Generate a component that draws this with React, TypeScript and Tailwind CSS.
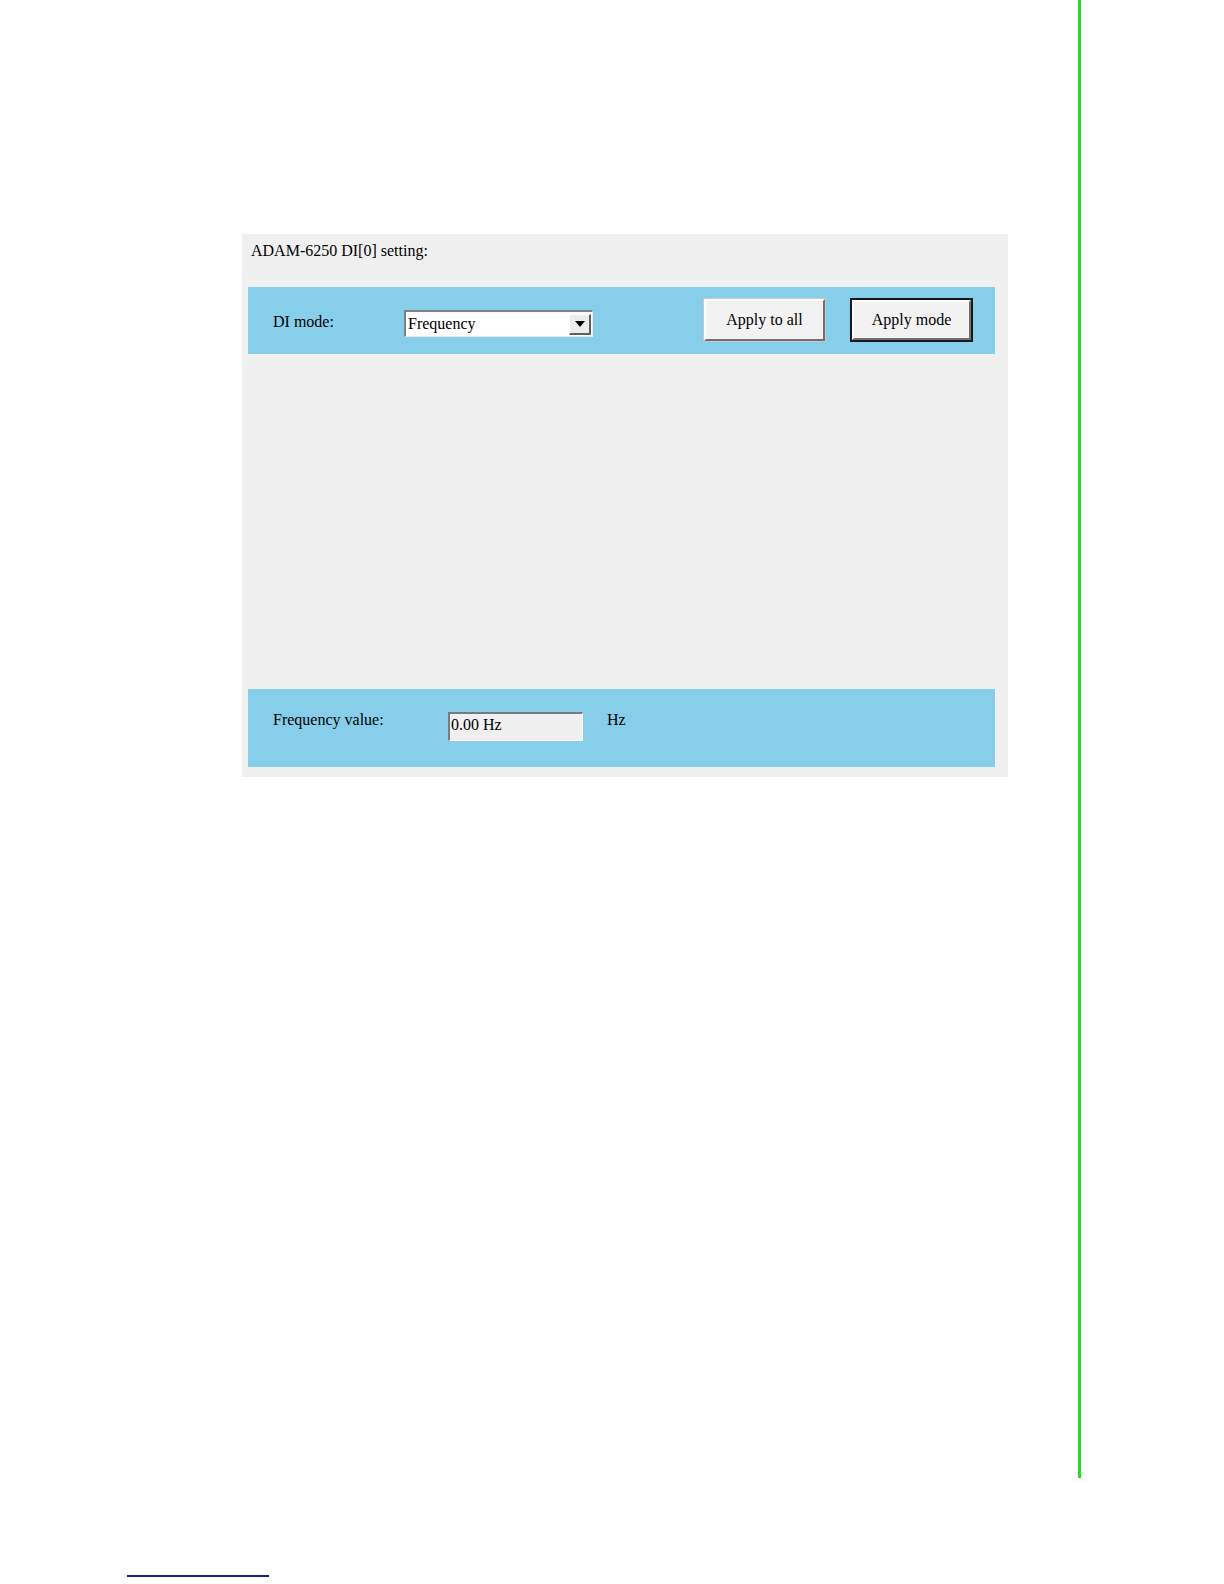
import React from "react";

const serif = { fontFamily: '"Liberation Serif", "Times New Roman", serif' };

function Button({ label, isDefault }: { label: string; isDefault?: boolean }) {
  const inner = (
    <div className="h-full w-full border-t-2 border-l-2 border-t-white border-l-white border-b-2 border-r-2 border-b-[#707070] border-r-[#707070] bg-[#f2f2f2] flex items-center justify-center text-[16px] text-black">
      {label}
    </div>
  );
  return isDefault ? (
    <div className="w-[123px] h-[44px] border-2 border-[#1a1a1a] bg-[#f2f2f2]">{inner}</div>
  ) : (
    <div className="w-[123px] h-[44px] border border-[#c8c8c8] bg-[#f2f2f2]">{inner}</div>
  );
}

export default function App() {
  return (
    <div className="w-[1224px] h-[1584px] bg-white flex flex-col" style={serif}>
      <div className="flex flex-row h-[1478px]">
        <div className="w-[1078px] flex flex-col">
          <div className="mt-[234px] ml-[242px] w-[766px] h-[543px] bg-[#f0f0f0] flex flex-col">
            <div className="pl-[9px] pt-[7px] h-[53px] text-[16px] leading-[20px] text-black">
              ADAM-6250 DI[0] setting:
            </div>
            <div className="ml-[6px] w-[747px] h-[67px] bg-[#87ceeb] flex flex-row items-start">
              <div className="ml-[25px] mt-[25px] w-[131px] text-[16px] leading-[20px] text-black">DI mode:</div>
              <div className="mt-[23px] w-[189px] h-[27px] bg-white border-t-2 border-l-2 border-t-[#808080] border-l-[#808080] border-b border-r border-b-[#e8e8e8] border-r-[#e8e8e8] flex flex-row items-center">
                <div className="flex-1 pl-[2px] text-[16px] leading-[20px] text-black">Frequency</div>
                <div className="w-[22px] h-[21px] mr-[1px] bg-[#ececec] border-t border-l border-t-white border-l-white border-b-2 border-r-2 border-b-[#606060] border-r-[#606060] flex items-center justify-center">
                  <svg width="10" height="6" viewBox="0 0 10 6">
                    <path d="M0 0 H10 L5 6 Z" fill="#000" />
                  </svg>
                </div>
              </div>
              <div className="ml-[110px] mt-[11px]">
                <Button label="Apply to all" />
              </div>
              <div className="ml-[24px] mt-[11px]">
                <Button label="Apply mode" isDefault />
              </div>
            </div>
            <div className="flex-1" />
            <div className="ml-[6px] w-[747px] h-[78px] bg-[#87ceeb] flex flex-row items-start">
              <div className="ml-[25px] mt-[21px] w-[175px] text-[16px] leading-[20px] text-black">Frequency value:</div>
              <div className="mt-[23px] w-[135px] h-[29px] bg-[#f0f0f0] border-t-2 border-l-2 border-t-[#7a7a7a] border-l-[#7a7a7a] border-b border-r border-b-white border-r-white flex items-start">
                <div className="pl-[1px] pt-[1px] text-[16px] leading-[20px] text-black">0.00 Hz</div>
              </div>
              <div className="ml-[24px] mt-[21px] text-[16px] leading-[20px] text-black">Hz</div>
            </div>
            <div className="h-[10px]" />
          </div>
        </div>
        <div className="w-[3px] h-full bg-[#1ee01e]" />
      </div>
      <div className="mt-[97px] ml-[127px] w-[142px] h-[2px] bg-[#1a1a9a]" />
    </div>
  );
}
